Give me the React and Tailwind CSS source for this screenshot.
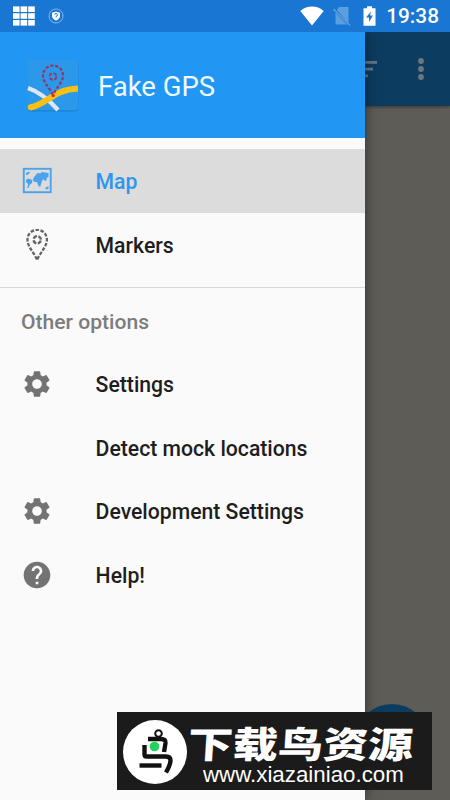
import React from "react";
import { MdSettings, MdHelp } from "react-icons/md";

const StatusBar = () => {
  return (
    <div className="h-8 bg-[#1976d2] flex items-center text-white">
      <svg className="ml-[13px] w-[22px] h-5" viewBox="0 0 22 20" fill="#fff">
        {[0, 7.6, 15.2].map((x) =>
          [0.4, 7.2, 14].map((y) => <rect key={`${x}-${y}`} x={x} y={y} width="6.6" height="5.6" />)
        )}
      </svg>
      <svg className="ml-[13px] w-4 h-4" viewBox="0 0 16 16">
        <circle cx="8" cy="8" r="7" fill="none" stroke="#84b7ea" strokeWidth="1" />
        <path d="M8 3.5l4 1.2v3.4c0 2.300-1.800 3.800-4 4.600-2.200-.8-4-2.300-4-4.600V4.700z" fill="#fff" />
        <path d="M6.700 6.700a1.400 1.400 0 1 1 1.500 1.500v1" fill="none" stroke="#1976d2" strokeWidth="1" />
      </svg>
      <svg className="ml-auto w-6 h-5" viewBox="0 0 24 20" fill="#fff">
        <path d="M0.300 5C7-.9 17-.9 23.700 5L12 19.400z" />
      </svg>
      <svg className="ml-[9px] w-[18px] h-5" viewBox="0 0 18 20">
        <path d="M6 1h9.500v16.500L4 4z" fill="#5c9fe0" />
        <path d="M2.500 6.500L14 18.500H3.500q-1 0-1-1z" fill="#5c9fe0" />
        <path d="M.5 3l16.500 16.500" stroke="#5c9fe0" strokeWidth="1.400" />
      </svg>
      <svg className="ml-3 w-[13px] h-5" viewBox="0 0 13 20">
        <path d="M4 .3h5v2h3.500v17.400H.5V2.300H4z" fill="#fff" />
        <path d="M8 5.500L3 11.500h3V16l4-6.500H7z" fill="#1976d2" />
      </svg>
      <span className="ml-[10px] mr-[11px] text-[20.800px] leading-8 font-medium">19:38</span>
    </div>
  );
};

const AppLogo = () => {
  return (
    <svg className="w-[52px] h-[52px]" viewBox="0 0 52 52">
      <rect x="1" y="1" width="50.300" height="50.500" rx="3" fill="#1e80cc" />
      <rect x="1" y="0" width="50" height="50.300" rx="3" fill="#2b98ea" />
      <path d="M1 28C13 32 23 41 31 50" fill="none" stroke="#dfe6fa" strokeWidth="4.300" />
      <path d="M3.500 47.500C21 44 26 29.500 51 28.500" fill="none" stroke="#fbc012" strokeWidth="6" />
      <circle cx="3.800" cy="47.300" r="3" fill="#fbc012" />
      <path
        d="M26 35C22 27 16 22 16 15.500a10 10 0 0 1 20 0C36 22 30 27 26 35z"
        fill="none"
        stroke="#963566"
        strokeWidth="2.200"
        strokeDasharray="3.200 1.800"
      />
      <circle cx="26" cy="16.500" r="3.400" fill="none" stroke="#963566" strokeWidth="2" strokeDasharray="3.600 1.740" />
      <circle cx="26.200" cy="35.500" r="1.600" fill="#e02a1b" />
    </svg>
  );
};

const MapIcon = () => {
  return (
    <svg className="w-8 h-8" viewBox="0 0 32 32" fill="#4ba3ec">
      <rect x="2.800" y="3.800" width="26.900" height="23.400" fill="none" stroke="#4ba3ec" strokeWidth="1.900" />
      <path d="M5 8l3-1.500 1 .8L6.500 10 5 9.500zM5 15l2-1.500 4.500 1.500-.5 3-2.500 2-1 3H6.300L7 19l-2-2z" />
      <path d="M13.500 11.500l3-3.500 3 .5 1-1.500 7 1v4l-2 1 .3 2-2 1-1.500-2-1.500 2.500-1.500 5h-1.500l-2-4.500h-2.500l-1.500-2.500 1-2z" />
      <path d="M24 23.500l1.500-1.500 2-.8v2.500l-2 .8z" />
    </svg>
  );
};

const PinIcon = () => {
  return (
    <svg className="w-8 h-8" viewBox="0 0 32 32" fill="none" stroke="#656565">
      <path
        d="M16 30.500C12.500 23 6.500 17.500 6.500 10.500a9.700 9.700 0 0 1 19.400 0C25.900 17.500 19.700 23 16.200 30.500"
        strokeWidth="2.300"
        strokeDasharray="3.600 1.500"
      />
      <circle cx="16.200" cy="10.800" r="3.600" strokeWidth="2.300" strokeDasharray="4.100 1.550" strokeDashoffset="-.8" />
    </svg>
  );
};

const NavItem = ({ icon, label, active }) => {
  return (
    <div
      className={`h-[63.700px] shrink-0 flex items-center pl-[21px] ${
        active ? "bg-[#dcdcdc] text-[#2f96ed]" : "text-[#1e1e1e]"
      }`}
    >
      <div className="w-[74.600px] text-[#737373]">{icon}</div>
      <span className="pt-[2px] text-[21.200px] font-medium">{label}</span>
    </div>
  );
};

const Drawer = () => {
  return (
    <div className="w-[365px] h-full relative bg-[#fafafa] flex flex-col shadow-[0_0_12px_rgba(0,0,0,0.5)]">
      <div className="h-[106px] shrink-0 bg-[#2196f3] flex items-center pl-[27px] pt-0.5">
        <AppLogo />
        <span className="ml-[19px] pt-[2px] text-[27.500px] text-[#f1faff]">Fake GPS</span>
      </div>
      <div className="pt-[11px] pb-[10.600px] border-b border-[#d8d8d8]">
        <NavItem icon={<MapIcon />} label="Map" active />
        <NavItem icon={<PinIcon />} label="Markers" />
      </div>
      <div className="h-16 shrink-0 flex items-center pl-[21px] pt-1 text-[21.100px] font-medium text-[#7c7c7c]">
        Other options
      </div>
      <NavItem icon={<MdSettings size={32} />} label="Settings" />
      <NavItem label="Detect mock locations" />
      <NavItem icon={<MdSettings size={32} />} label="Development Settings" />
      <NavItem icon={<MdHelp size={32} />} label="Help!" />
    </div>
  );
};

// Dimmed map screen that stays visible to the right of the drawer
const MapScreen = () => {
  return (
    <div className="absolute inset-0 bg-[#5e5c57]">
      <div className="h-[74px] bg-[#0d3c61] flex items-center justify-end pr-[22px] shadow-[0_1px_3px_rgba(0,0,0,0.4)]">
        <svg className="w-[26px] h-[18px]" viewBox="0 0 26 18" fill="#637888">
          <rect x="0" y="1" width="26" height="2.800" />
          <rect x="4" y="7.700" width="18" height="2.800" />
          <rect x="9" y="14.400" width="8" height="2.800" />
        </svg>
        <svg className="ml-[37px] w-3.5 h-6" viewBox="0 0 14 24" fill="#6d777f">
          <circle cx="7" cy="4" r="2.900" />
          <circle cx="7" cy="12" r="2.900" />
          <circle cx="7" cy="20" r="2.900" />
        </svg>
      </div>
      <div className="absolute left-[355px] top-[672px] w-[74px] h-[74px] rounded-full bg-[#0d3c61]" />
    </div>
  );
};

const Watermark = () => {
  return (
    <div className="absolute left-[117px] top-[712px] w-[315px] h-[78px] bg-[#1b1b1b] flex items-center text-white">
      <svg className="ml-[5px] w-[66px] h-[66px] shrink-0" viewBox="0 0 66 66">
        <circle cx="33" cy="34" r="32" fill="#fff" />
        <circle cx="36.500" cy="15.500" r="3.300" fill="none" stroke="#111" strokeWidth="2" />
        <g fill="none" stroke="#111" strokeWidth="4.400" strokeLinejoin="round">
          <path d="M26 21h13q5 0 4.500 4l-1.500 9" />
          <path d="M22.500 27v9.500q0 2 2 2H44q4.500 0 4.500 4t-4.500 12" />
          <path d="M17.500 47.500h22" />
        </g>
        <circle cx="32.500" cy="28.500" r="4.800" fill="#21d35c" />
      </svg>
      <div className="w-[240px] pt-[13px] flex flex-col">
        <span className="font-['Noto_Sans_CJK_SC',sans-serif] font-black text-[36.500px] leading-[34px] origin-left scale-x-[1.235] -skew-x-3 whitespace-nowrap">
          下载鸟资源
        </span>
        <span className="ml-[15px] font-['Liberation_Sans',sans-serif] text-[22.300px] leading-[29px] whitespace-nowrap">
          www.xiazainiao.com
        </span>
      </div>
    </div>
  );
};

const App = () => {
  return (
    <div className="w-[450px] h-[800px] relative overflow-hidden flex flex-col font-['Roboto',sans-serif]">
      <StatusBar />
      <div className="relative flex-1 overflow-hidden">
        <MapScreen />
        <Drawer />
      </div>
      <Watermark />
    </div>
  );
};

export default App;
